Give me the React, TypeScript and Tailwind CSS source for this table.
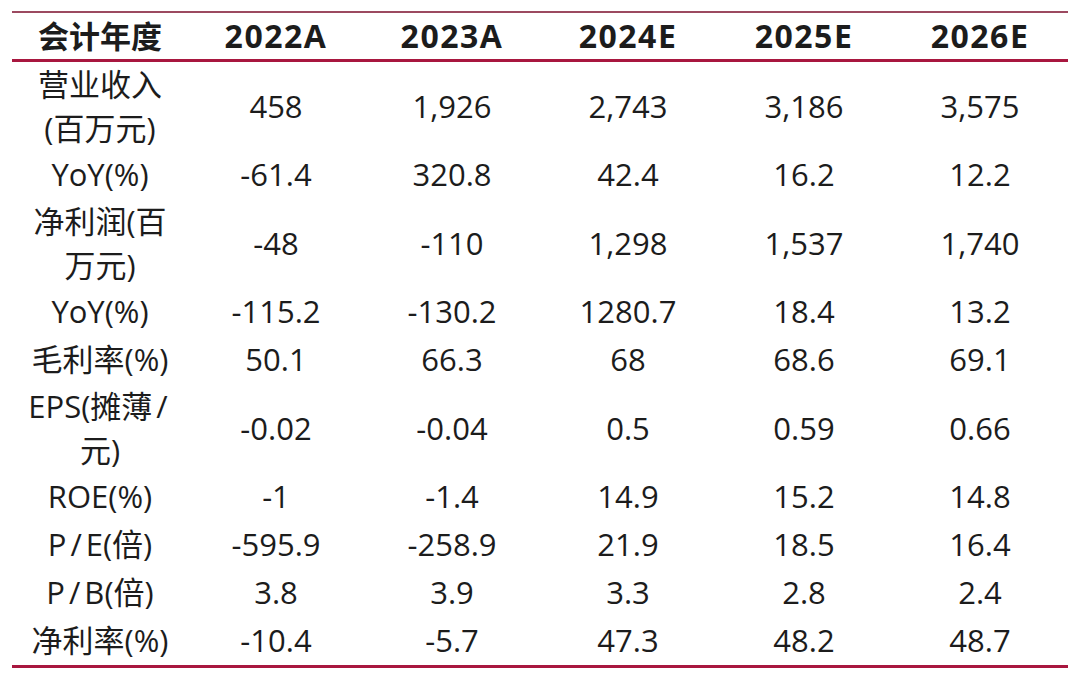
import type { ReactNode } from 'react';

const HEADERS = ['2022A', '2023A', '2024E', '2025E', '2026E'];

type Row = { label: ReactNode[]; values: string[]; tall?: boolean };

// slash in the labels sits with a little air around it
const Slash = () => <span className="px-[4px]">/</span>;

const ROWS: Row[] = [
  { label: ['营业收入', '(百万元)'], values: ['458', '1,926', '2,743', '3,186', '3,575'], tall: true },
  { label: ['YoY(%)'], values: ['-61.4', '320.8', '42.4', '16.2', '12.2'] },
  { label: ['净利润(百', '万元)'], values: ['-48', '-110', '1,298', '1,537', '1,740'], tall: true },
  { label: ['YoY(%)'], values: ['-115.2', '-130.2', '1280.7', '18.4', '13.2'] },
  { label: ['毛利率(%)'], values: ['50.1', '66.3', '68', '68.6', '69.1'] },
  { label: [<>EPS(摊薄<Slash /></>, '元)'], values: ['-0.02', '-0.04', '0.5', '0.59', '0.66'], tall: true },
  { label: ['ROE(%)'], values: ['-1', '-1.4', '14.9', '15.2', '14.8'] },
  { label: [<>P<Slash />E(倍)</>], values: ['-595.9', '-258.9', '21.9', '18.5', '16.4'] },
  { label: [<>P<Slash />B(倍)</>], values: ['3.8', '3.9', '3.3', '2.8', '2.4'] },
  { label: ['净利率(%)'], values: ['-10.4', '-5.7', '47.3', '48.2', '48.7'] },
];

export default function App() {
  return (
    <div className="w-[1080px] h-[682px] bg-white pt-[11px] font-['Open_Sans','Noto_Sans_CJK_SC',sans-serif] text-[#1c1c1c]">
      <div className="ml-[12px] w-[1056px] border-t-2 border-b-[3px] border-t-[#9c4a60] border-b-[#a8173f]">
        {/* header */}
        <div className="grid grid-cols-6 h-[49px] border-b-[3px] border-[#a8173f] items-center">
          <div className="text-center text-[31px] font-bold leading-none">会计年度</div>
          {HEADERS.map((h) => (
            <div key={h} className="text-center text-[32px] font-bold leading-none tracking-[1.5px]">
              {h}
            </div>
          ))}
        </div>

        {ROWS.map((row, i) => (
          <div
            key={i}
            className={`grid grid-cols-6 items-center pb-[3px] ${row.tall ? 'h-[89px]' : 'h-[48px]'}`}
          >
            <div className="text-center text-[31px] leading-[44px]">
              {row.label.map((l, k) => (
                <div key={k}>{l}</div>
              ))}
            </div>
            {row.values.map((v, j) => (
              <div key={j} className="text-center text-[31px] leading-[44px]">
                {v}
              </div>
            ))}
          </div>
        ))}
      </div>
    </div>
  );
}
